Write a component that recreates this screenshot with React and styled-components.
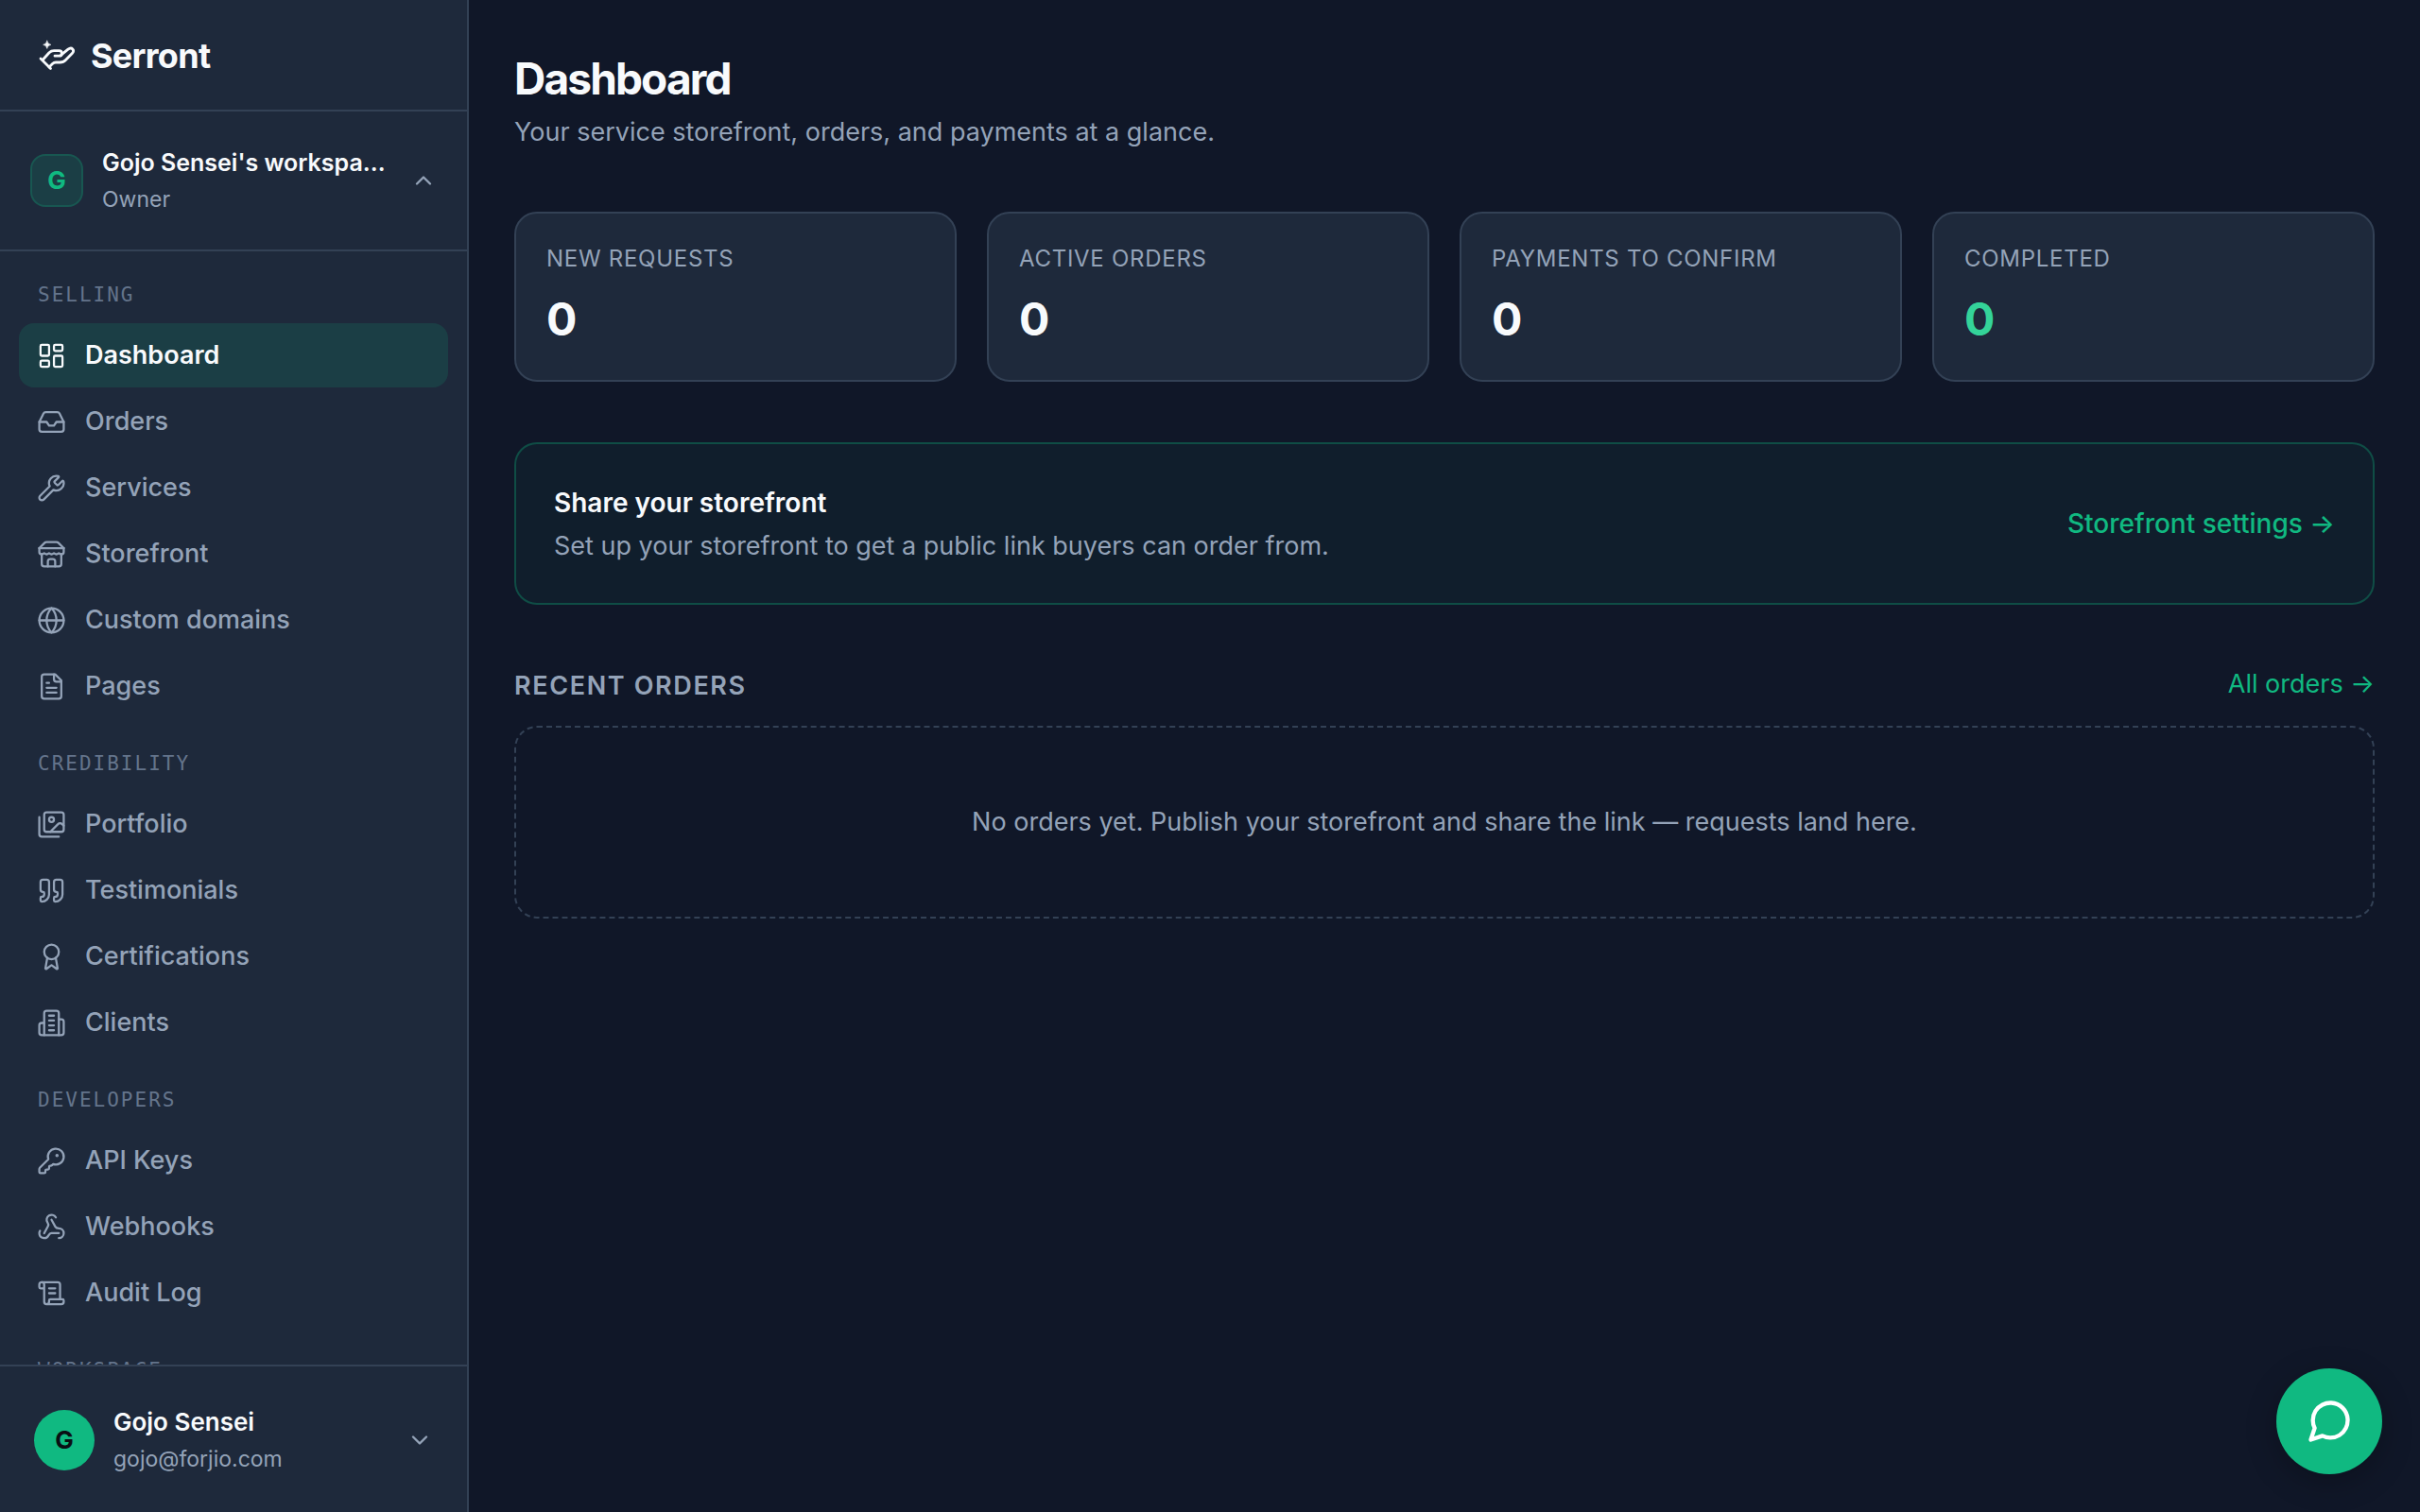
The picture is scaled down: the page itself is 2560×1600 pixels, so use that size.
import React from "react";
import styled, { createGlobalStyle } from "styled-components";
import {
  LayoutDashboard, Inbox, Wrench, Globe, Quote, Award,
  KeyRound, Webhook, ScrollText, ChevronUp, ChevronDown,
} from "lucide-react";

const sans = `Inter, "Liberation Sans", sans-serif`;
const mono = `"DejaVu Sans Mono", "Liberation Mono", monospace`;

const c = {
  bg: "#101728",
  panel: "#1e293b",
  line: "#334155",
  text: "#f8fafc",
  muted: "#94a3b8",
  faint: "#64748b",
  green: "#10b981",
};

const GlobalStyle = createGlobalStyle`
  * { box-sizing: border-box; margin: 0; padding: 0; }
  body { background: ${c.bg}; color: ${c.text}; font-family: ${sans}; font-size: 27px; line-height: 40px; }
  button { font: inherit; color: inherit; background: none; border: 0; text-align: left; cursor: pointer; }
  a { color: inherit; text-decoration: none; }
  ul { list-style: none; }
`;

const Shell = styled.div`
  display: grid;
  grid-template-columns: 496px minmax(0, 1fr);
  height: 100vh;
`;

const Sidebar = styled.aside`
  display: flex;
  flex-direction: column;
  min-height: 0;
  background: ${c.panel};
  border-right: 2px solid ${c.line};
`;

const Brand = styled.a`
  display: flex;
  align-items: center;
  gap: 14px;
  height: 118px;
  flex: none;
  padding: 2px 40px 0;
  border-bottom: 2px solid ${c.line};
  font-size: 36px;
  font-weight: 700;
  letter-spacing: -0.02em;
`;

const AccountButton = styled.button`
  display: flex;
  align-items: center;
  gap: 20px;
  flex: none;
  width: 100%;
  height: ${(p) => (p.$footer ? "156px" : "148px")};
  padding: ${(p) => (p.$footer ? "2px 36px 0" : "0 32px")};
  border-${(p) => (p.$footer ? "top" : "bottom")}: 2px solid ${c.line};
  color: ${c.muted};
`;

const Avatar = styled.span`
  display: grid;
  place-items: center;
  flex: none;
  width: 56px;
  height: 56px;
  border: 2px solid rgba(16, 185, 129, 0.2);
  border-radius: 16px;
  background: rgba(16, 185, 129, 0.15);
  color: ${c.green};
  font-size: 26px;
  font-weight: 700;
`;

const RoundAvatar = styled(Avatar)`
  width: 64px;
  height: 64px;
  border: 0;
  border-radius: 50%;
  background: ${c.green};
  color: #0a0f14;
`;

const AccountText = styled.span`
  display: flex;
  flex-direction: column;
  gap: 2px;
  flex: 1;
  min-width: 0;
  padding-right: 4px;
`;

const AccountName = styled.span`
  overflow: hidden;
  text-overflow: ellipsis;
  white-space: nowrap;
  color: ${c.text};
  font-size: ${(p) => (p.$large ? "26px" : "25px")};
  line-height: 38px;
  font-weight: 600;
`;

const AccountNote = styled.span`
  font-size: 23px;
  line-height: 36px;
`;

const Nav = styled.nav`
  flex: 1;
  min-height: 0;
  overflow: hidden;
  padding: 24px 20px;
  display: flex;
  flex-direction: column;
  gap: 26px;
`;

const GroupLabel = styled.h2`
  padding: 0 20px;
  margin-bottom: 8px;
  font-family: ${mono};
  font-size: 21px;
  line-height: 44px;
  font-weight: 400;
  letter-spacing: 2px;
  text-transform: uppercase;
  color: ${c.faint};
`;

const NavList = styled.ul`
  display: flex;
  flex-direction: column;
  gap: 2px;
`;

const NavLink = styled.a`
  display: flex;
  align-items: center;
  gap: 20px;
  height: 68px;
  padding: 0 19px;
  border-radius: 16px;
  font-weight: ${(p) => (p.$active ? 600 : 500)};
  color: ${(p) => (p.$active ? c.text : c.muted)};
  background: ${(p) => (p.$active ? "rgba(16, 185, 129, 0.15)" : "transparent")};
`;

const Main = styled.main`
  padding: 56px 48px 48px;
  overflow: auto;
`;

const PageHead = styled.header`
  margin-bottom: 64px;
`;

const Title = styled.h1`
  font-size: 46px;
  line-height: 54px;
  font-weight: 700;
  letter-spacing: -0.04em;
  margin-bottom: 10px;
`;

const Muted = styled.p`
  color: ${c.muted};
`;

const Stats = styled.section`
  display: grid;
  grid-template-columns: repeat(4, minmax(0, 1fr));
  gap: 32px;
  margin-bottom: 64px;
`;

const StatCard = styled.div`
  padding: 30px 32px 34px;
  border: 2px solid ${c.line};
  border-radius: 24px;
  background: ${c.panel};
`;

const StatLabel = styled.p`
  font-size: 24px;
  line-height: 36px;
  letter-spacing: 0.03em;
  text-transform: uppercase;
  color: ${c.muted};
`;

const StatValue = styled.p`
  margin-top: 16px;
  font-size: 48px;
  line-height: 60px;
  font-weight: 700;
  color: ${(p) => (p.$good ? "#34d399" : c.text)};
`;

const Banner = styled.section`
  display: flex;
  align-items: center;
  justify-content: space-between;
  gap: 32px;
  padding: 40px;
  margin-bottom: 64px;
  border: 2px solid rgba(16, 185, 129, 0.3);
  border-radius: 24px;
  background: rgba(16, 185, 129, 0.05);
`;

const BannerTitle = styled.h2`
  margin-bottom: 4px;
  font-size: 28px;
  line-height: 44px;
  font-weight: 600;
`;

const GreenLink = styled.a`
  color: ${c.green};
  font-size: ${(p) => (p.$strong ? "28px" : "27px")};
  font-weight: ${(p) => (p.$strong ? 500 : 400)};
`;

const SectionHead = styled.div`
  display: flex;
  align-items: flex-start;
  justify-content: space-between;
  margin-bottom: 20px;
`;

const SectionTitle = styled.h2`
  font-size: 27px;
  line-height: 44px;
  font-weight: 600;
  letter-spacing: 0.06em;
  text-transform: uppercase;
  color: ${c.muted};
`;

const Empty = styled.div`
  padding: 80px 40px;
  border: 2px dashed ${c.line};
  border-radius: 24px;
  text-align: center;
  color: ${c.muted};
`;

const ChatButton = styled.button`
  position: fixed;
  right: 40px;
  bottom: 40px;
  display: grid;
  place-items: center;
  width: 112px;
  height: 112px;
  border-radius: 50%;
  background: ${c.green};
  color: #ffffff;
  box-shadow: 0 8px 32px rgba(0, 0, 0, 0.25);
`;

const Logo = () => (
  <svg width="42" height="42" viewBox="0 0 42 42" fill="none" stroke="currentColor" strokeWidth="2.8" strokeLinecap="round" strokeLinejoin="round" aria-hidden="true">
    <path d="M3 24 13.500 34.500" />
    <path d="M5.500 25 12 17.700Q14.200 15.600 17 15.600h5.500c3.800 0 3.800 5.600 0 5.600h-4.500" />
    <path d="M25 19.800 32 14.200c4-3 7.500 1 4.300 4.400L29.500 25.500Q27.200 28 23.500 28h-4.500q-2 0-3.500 1.500L12 33" />
    <path d="M9.800 5.200Q10.400 8.700 13.900 9.300 10.400 9.900 9.800 13.400 9.200 9.900 5.700 9.300 9.200 8.700 9.800 5.200Z" fill="currentColor" strokeWidth="0.6" />
  </svg>
);

const outlineIcon = (...shapes) =>
  function OutlineIcon({ size = 24, strokeWidth = 2 }) {
    return (
      <svg width={size} height={size} viewBox="0 0 24 24" fill="none" stroke="currentColor" strokeWidth={strokeWidth} strokeLinecap="round" strokeLinejoin="round" aria-hidden="true">
        {shapes.map((d) => <path key={d} d={d} />)}
      </svg>
    );
  };

const StoreIcon = outlineIcon(
  "m2 7 4.41-4.41A2 2 0 0 1 7.83 2h8.34a2 2 0 0 1 1.42.59L22 7",
  "M4 12v8a2 2 0 0 0 2 2h12a2 2 0 0 0 2-2v-8",
  "M15 22v-4a2 2 0 0 0-2-2h-2a2 2 0 0 0-2 2v4",
  "M2 7h20",
  "M22 7v3a2 2 0 0 1-2 2a2.7 2.7 0 0 1-1.59-.63.7.7 0 0 0-.82 0A2.7 2.7 0 0 1 16 12a2.7 2.7 0 0 1-1.59-.63.7.7 0 0 0-.82 0A2.7 2.7 0 0 1 12 12a2.7 2.7 0 0 1-1.59-.63.7.7 0 0 0-.82 0A2.7 2.7 0 0 1 8 12a2.7 2.7 0 0 1-1.59-.63.7.7 0 0 0-.82 0A2.7 2.7 0 0 1 4 12a2 2 0 0 1-2-2V7"
);

const PageIcon = outlineIcon(
  "M15 2H6a2 2 0 0 0-2 2v16a2 2 0 0 0 2 2h12a2 2 0 0 0 2-2V7Z",
  "M14 2v4a2 2 0 0 0 2 2h4",
  "M10 9H8",
  "M16 13H8",
  "M16 17H8"
);

const GalleryIcon = outlineIcon(
  "M18 22H4a2 2 0 0 1-2-2V6",
  "m22 13-1.296-1.296a2.41 2.41 0 0 0-3.408 0L11 18",
  "M14 8a2 2 0 1 1-4 0 2 2 0 0 1 4 0Z",
  "M8 2h12a2 2 0 0 1 2 2v12a2 2 0 0 1-2 2H8a2 2 0 0 1-2-2V4a2 2 0 0 1 2-2Z"
);

const OfficeIcon = outlineIcon(
  "M6 22V4a2 2 0 0 1 2-2h8a2 2 0 0 1 2 2v18Z",
  "M6 12H4a2 2 0 0 0-2 2v6a2 2 0 0 0 2 2h2",
  "M18 9h2a2 2 0 0 1 2 2v9a2 2 0 0 1-2 2h-2",
  "M10 6h4",
  "M10 10h4",
  "M10 14h4",
  "M10 18h4"
);

const ChatIcon = outlineIcon(
  "M21 11.5a8.38 8.38 0 0 1-.9 3.8 8.5 8.5 0 0 1-7.6 4.7 8.38 8.38 0 0 1-3.8-.9L3 21l1.9-5.7a8.38 8.38 0 0 1-.9-3.8 8.5 8.5 0 0 1 4.7-7.6 8.38 8.38 0 0 1 3.8-.9h.5a8.48 8.48 0 0 1 8 8v.5z"
);

const groups = [
  { label: "Selling", items: [
    ["Dashboard", LayoutDashboard], ["Orders", Inbox], ["Services", Wrench],
    ["Storefront", StoreIcon], ["Custom domains", Globe], ["Pages", PageIcon],
  ] },
  { label: "Credibility", items: [
    ["Portfolio", GalleryIcon], ["Testimonials", Quote], ["Certifications", Award], ["Clients", OfficeIcon],
  ] },
  { label: "Developers", items: [
    ["API Keys", KeyRound], ["Webhooks", Webhook], ["Audit Log", ScrollText],
  ] },
  { label: "Workspace", items: [] },
];

const stats = [
  ["New requests", 0], ["Active orders", 0], ["Payments to confirm", 0], ["Completed", 0],
];

export default function App() {
  return (
    <>
      <GlobalStyle />
      <Shell>
        <Sidebar>
          <Brand href="#"><Logo />Serront</Brand>
          <AccountButton type="button">
            <Avatar>G</Avatar>
            <AccountText>
              <AccountName>Gojo Sensei's workspace</AccountName>
              <AccountNote>Owner</AccountNote>
            </AccountText>
            <ChevronUp size={28} />
          </AccountButton>
          <Nav>
            {groups.map((g) => (
              <div key={g.label}>
                <GroupLabel>{g.label}</GroupLabel>
                <NavList>
                  {g.items.map(([name, Icon]) => (
                    <li key={name}>
                      <NavLink href="#" $active={name === "Dashboard"}>
                        <Icon size={31} strokeWidth={1.75} />
                        {name}
                      </NavLink>
                    </li>
                  ))}
                </NavList>
              </div>
            ))}
          </Nav>
          <AccountButton type="button" $footer>
            <RoundAvatar>G</RoundAvatar>
            <AccountText>
              <AccountName $large>Gojo Sensei</AccountName>
              <AccountNote>gojo@forjio.com</AccountNote>
            </AccountText>
            <ChevronDown size={28} />
          </AccountButton>
        </Sidebar>
        <Main>
          <PageHead>
            <Title>Dashboard</Title>
            <Muted>Your service storefront, orders, and payments at a glance.</Muted>
          </PageHead>
          <Stats>
            {stats.map(([label, value]) => (
              <StatCard key={label}>
                <StatLabel>{label}</StatLabel>
                <StatValue $good={label === "Completed"}>{value}</StatValue>
              </StatCard>
            ))}
          </Stats>
          <Banner>
            <div>
              <BannerTitle>Share your storefront</BannerTitle>
              <Muted>Set up your storefront to get a public link buyers can order from.</Muted>
            </div>
            <GreenLink href="#" $strong>Storefront settings →</GreenLink>
          </Banner>
          <section>
            <SectionHead>
              <SectionTitle>Recent orders</SectionTitle>
              <GreenLink href="#">All orders →</GreenLink>
            </SectionHead>
            <Empty>No orders yet. Publish your storefront and share the link — requests land here.</Empty>
          </section>
        </Main>
      </Shell>
      <ChatButton type="button" aria-label="Open chat"><ChatIcon size={52} /></ChatButton>
    </>
  );
}
